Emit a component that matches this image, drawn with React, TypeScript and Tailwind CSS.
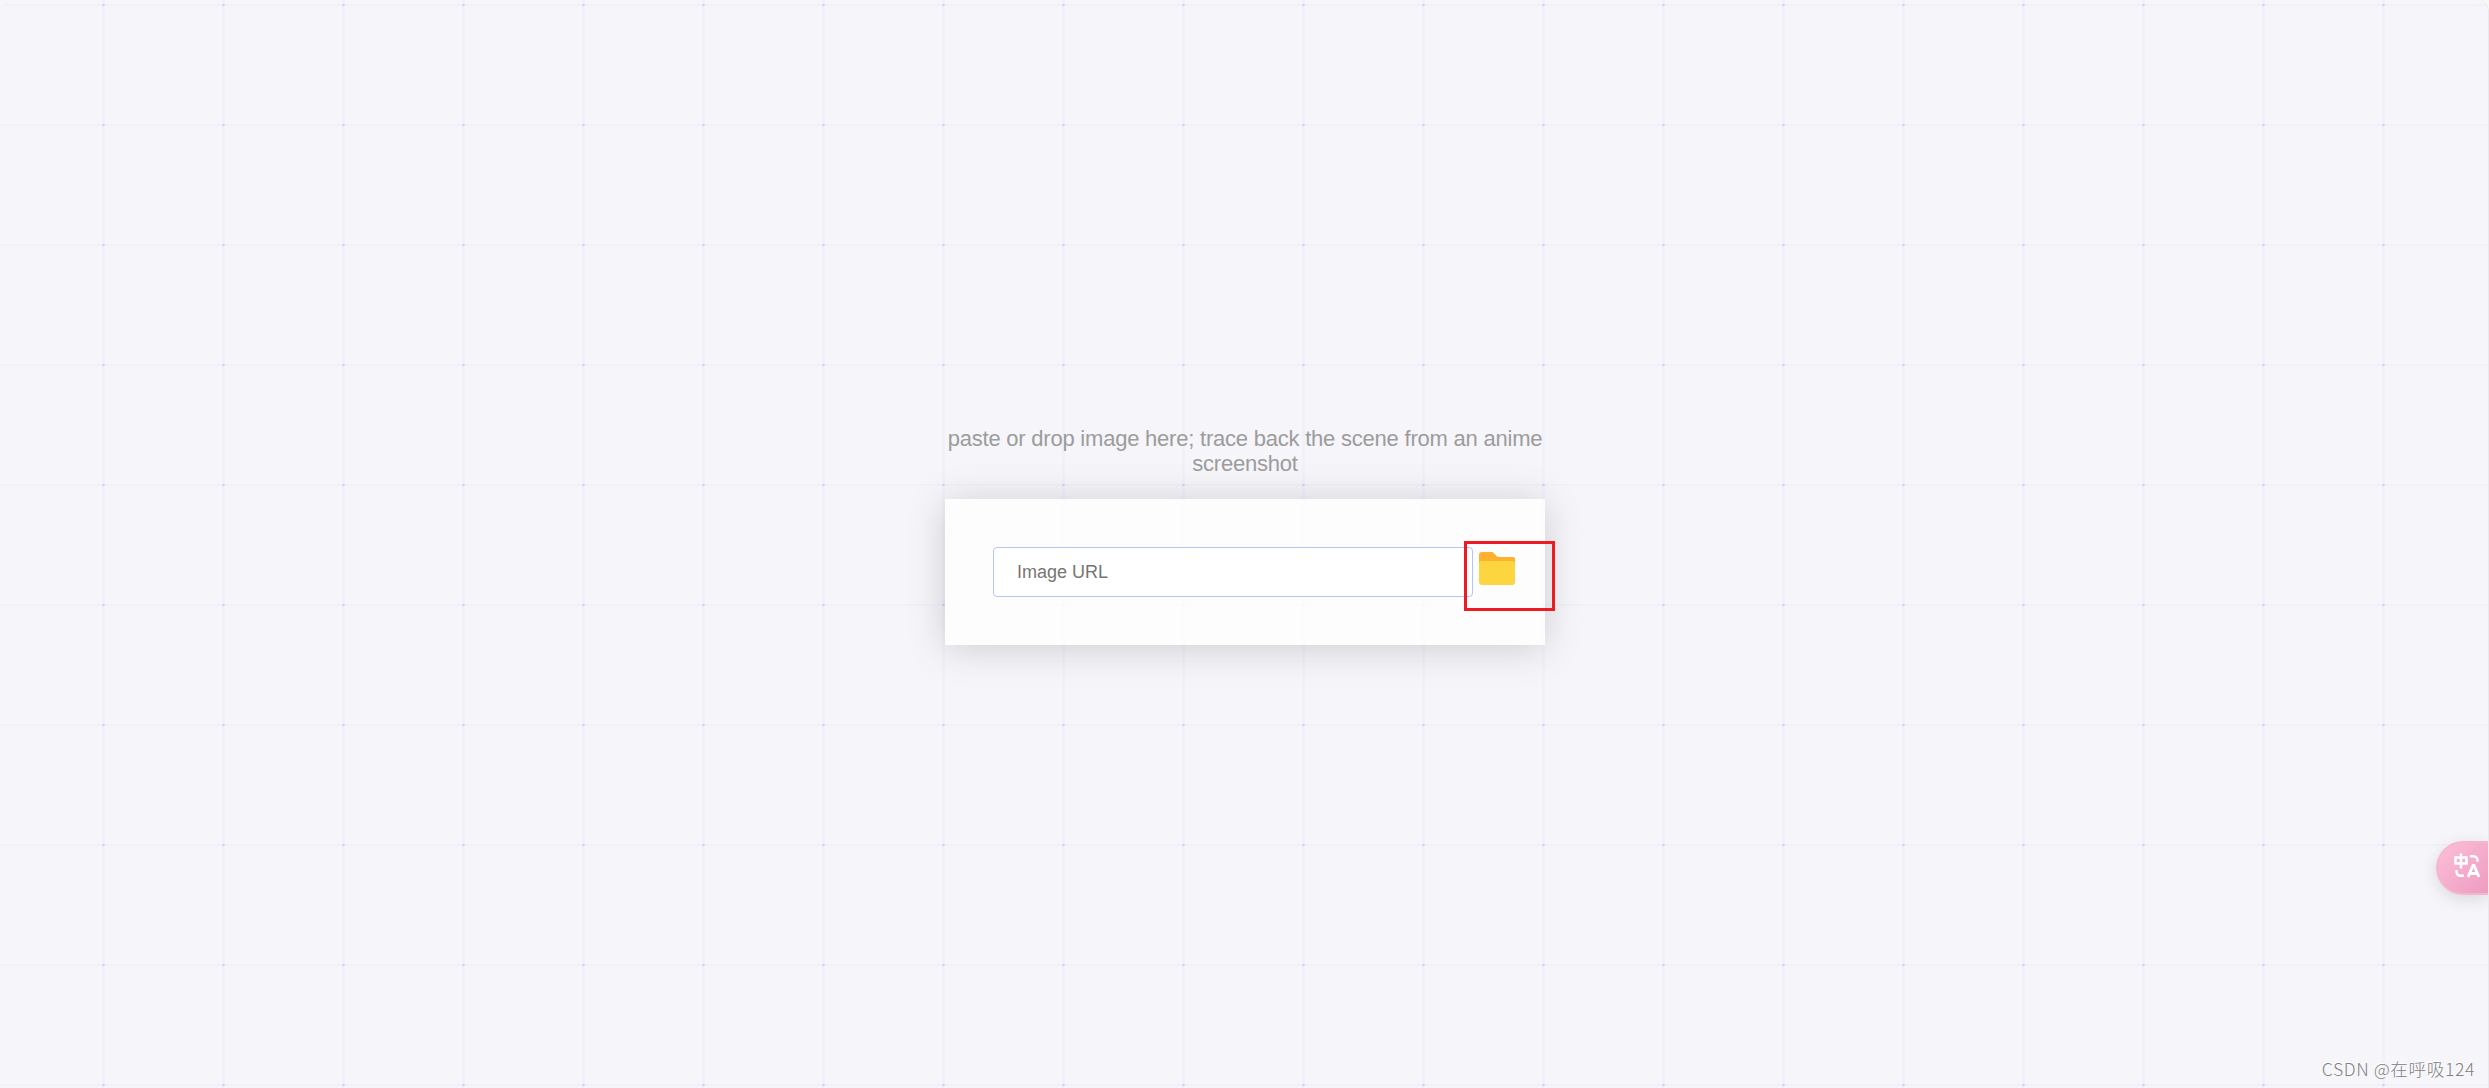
import { useState } from "react";

export default function App() {
  const [url, setUrl] = useState("");

  return (
    <div className="bg-[#f7f7f7]">
      <div className="relative flex h-[1088px] w-[2489px] flex-col items-center overflow-hidden rounded-t-[12px] border-r border-[#e9e9ee] bg-[#f5f5fa] pl-0.5 font-['Liberation_Sans',Arial,sans-serif]">
        <Grid />

        <main className="relative mt-[426px] w-[600px]">
          <p className="text-center text-[22px] leading-[25px] tracking-[-0.22px] text-[#9c9c9c]">
            paste or drop image here; trace back the scene from an anime screenshot
          </p>

          <div className="mt-[23px] flex h-[146px] items-start bg-white/80 px-12 py-12 shadow-[0_3px_36px_rgba(0,0,0,0.17)]">
            <input
              value={url}
              onChange={(e) => setUrl(e.target.value)}
              placeholder="Image URL"
              className="h-[50px] w-[480px] shrink-0 rounded-[4px] border border-[#b3c3ff] bg-white px-[23px] text-[18px] outline-none placeholder:text-[#757575]"
            />
            <button type="button" aria-label="Upload" className="mt-[5px] ml-1.5 shrink-0">
              <FolderIcon />
            </button>
          </div>

          {/* highlight */}
          <div className="absolute top-[115px] left-[519px] h-[70px] w-[91px] border-3 border-[#ed1c24]" />
        </main>

        <button
          type="button"
          aria-label="Translate"
          className="absolute top-[841px] right-0 flex h-[54px] w-[52px] items-start rounded-l-full border-2 border-r-0 border-[#f5b5cf] bg-linear-to-br from-[#fbbfd8] to-[#ee9cc2] pt-2.5 pl-4 shadow-[0_4px_16px_rgba(0,0,0,0.12)]"
        >
          <TranslateIcon />
        </button>

        <footer className="relative mt-auto self-end pr-[13px] pb-[7px] font-['Noto_Sans_CJK_SC',sans-serif] text-[17.6px] leading-6 font-light tracking-[0.6px] text-[#808080] [text-shadow:-1px_-1px_0_#fff]">
          CSDN @在呼吸124
        </footer>
      </div>
    </div>
  );
}

function Grid() {
  return (
    <svg className="absolute inset-0 h-full w-full" aria-hidden="true">
      <defs>
        <pattern id="grid" x="102" y="4" width="120" height="120" patternUnits="userSpaceOnUse">
          <rect width="120" height="2" fill="#f1f1f9" />
          <rect width="3" height="120" fill="#f0f1f9" />
          <rect width="3" height="2" fill="#dddcfc" />
          <rect x="1" width="1" height="2" fill="#cfcdfd" />
        </pattern>
      </defs>
      <rect width="100%" height="100%" fill="url(#grid)" />
    </svg>
  );
}

function FolderIcon() {
  return (
    <svg width="36" height="33" viewBox="0 0 36 33">
      <path d="M3 0h9.500c1.200 0 1.800.5 2.500 1.300l2.700 3c.5.500 1 .7 1.800.7H34c1.200 0 2 .8 2 2v8H0V3c0-1.700 1.300-3 3-3z" fill="#ffb02e" />
      <path d="M2 9h32c1.200 0 2 .8 2 2v19c0 1.700-1.300 3-3 3H3c-1.700 0-3-1.300-3-3V11c0-1.200.8-2 2-2z" fill="#fcd53f" />
    </svg>
  );
}

function TranslateIcon() {
  return (
    <svg width="26" height="25" viewBox="0 0 26 25" fill="none" stroke="#fff" strokeWidth="2.500">
      <path d="M1.500 4.500h11v6h-11zM7 0.500v15" />
      <path d="M16 3.200h3.500a4 4 0 0 1 4 4v1.500M2.500 17v1.700a4 4 0 0 0 4 4H10" />
      <path d="M14 24l5-11.500h1l5 11.500M15.800 20.500h7.500" strokeWidth="2.800" />
    </svg>
  );
}
